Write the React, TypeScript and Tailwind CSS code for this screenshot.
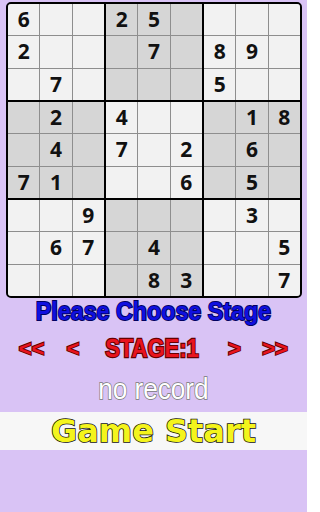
import React from "react";

const board: string[] = [
  "6__25____",
  "2___7_89_",
  "_7____5__",
  "_2_4___18",
  "_4_7_2_6_",
  "71___6_5_",
  "__9____3_",
  "_67_4___5",
  "____83__7",
];

const shaded = (br: number, bc: number) => (br + bc) % 2 === 1;

function Block({ br, bc }: { br: number; bc: number }) {
  const cells = [];
  for (let r = 0; r < 3; r++) {
    for (let c = 0; c < 3; c++) {
      const ch = board[br * 3 + r][bc * 3 + c];
      cells.push(
        <div
          key={`${r}-${c}`}
          className={`flex items-center justify-center text-[21px] font-bold text-[#111] leading-none ${
            shaded(br, bc) ? "bg-[#d6d6d6]" : "bg-[#f2f2f2]"
          }`}
        >
          {ch === "_" ? "" : ch}
        </div>
      );
    }
  }
  return <div className="grid grid-cols-3 grid-rows-3 gap-px bg-[#8e8e8e]">{cells}</div>;
}

export default function App() {
  const blocks = [];
  for (let br = 0; br < 3; br++) for (let bc = 0; bc < 3; bc++) blocks.push(<Block key={`${br}${bc}`} br={br} bc={bc} />);
  return (
    <div className="w-[307px] h-[512px] bg-[#d9c3f5] overflow-hidden font-['Liberation_Sans',sans-serif]">
      <div className="pl-[6px] pt-[2px]">
        <div className="w-[296px] h-[296px] border-2 border-black rounded-[5px] overflow-hidden bg-black grid grid-cols-3 grid-rows-3 gap-[2px] font-['Open_Sans',sans-serif]">
          {blocks}
        </div>
      </div>
      <div className="h-[26px] flex items-center justify-center">
        <span className="inline-block text-[25px] font-bold text-[#1010e0] leading-none scale-x-[0.93] [-webkit-text-stroke:2px_#000060] [paint-order:stroke_fill]">
          Please Choose Stage
        </span>
      </div>
      <div className="h-[50px] grid grid-cols-[63px_20px_138px_27px_54px] items-center text-[22px] font-bold text-[#e8141e] leading-none [-webkit-text-stroke:2px_#600] [paint-order:stroke_fill]">
        <span className="text-center">&lt;&lt;</span>
        <span className="text-center">&lt;</span>
        <span className="text-center inline-block scale-y-[1.15]">STAGE:1</span>
        <span className="text-center">&gt;</span>
        <span className="text-center">&gt;&gt;</span>
      </div>
      <div className="h-[30px] flex items-center justify-center">
        <span className="inline-block text-[30px] text-white leading-none scale-x-[0.87] [-webkit-text-stroke:1.5px_#777] [paint-order:stroke_fill]">
          no record
        </span>
      </div>
      <div className="mt-[8px] h-[38px] bg-[#f7f7f7] flex items-center justify-center">
        <span className="inline-block text-[32px] font-bold text-[#f4f41c] leading-none font-['DejaVu_Sans',sans-serif] [-webkit-text-stroke:1.5px_#111] [paint-order:stroke_fill]">
          Game Start
        </span>
      </div>
    </div>
  );
}
